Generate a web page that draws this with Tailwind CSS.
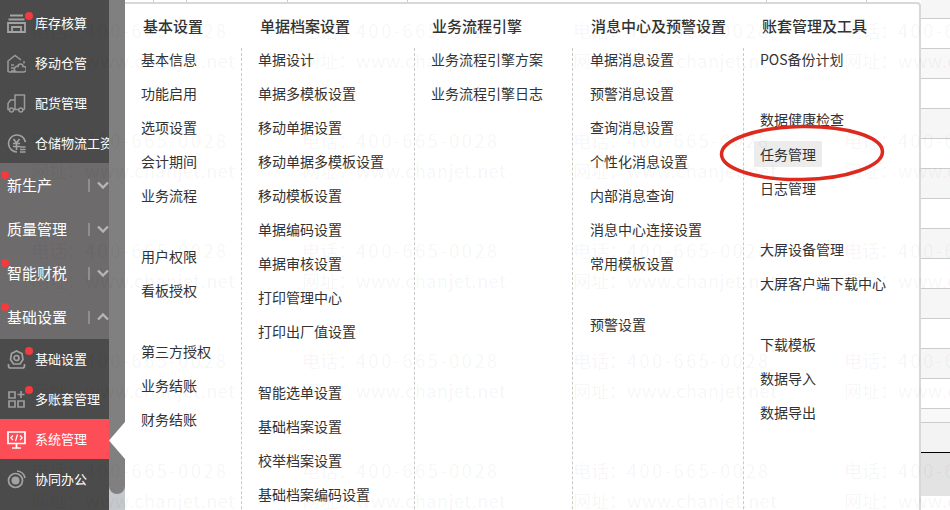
<!DOCTYPE html>
<html lang="zh">
<head>
<meta charset="utf-8">
<script src="https://cdn.jsdelivr.net/npm/@tailwindcss/browser@4"></script>
</head>
<body class="m-0">
<div class="relative flex h-[510px] w-[950px] overflow-hidden bg-white font-['Noto_Sans_CJK_SC','Noto_Sans',sans-serif] text-[14px] text-[#333]">

  <!-- sidebar -->
  <aside class="flex h-full w-[109px] shrink-0 flex-col bg-[#4b4b4b] pt-[3px] text-white">
    <div class="relative flex h-10 items-center overflow-hidden whitespace-nowrap pl-[7px] text-[13px]">
      <svg class="mr-[9px] h-[19px] w-[19px] shrink-0" viewBox="0 0 19 19" fill="none" stroke="#a3a3a3" stroke-width="1.8"><path d="M3 1.500h13M1.500 5.500h16M1 9h17v9H1zM5 13h9v5H5z"/></svg>
      <span>库存核算</span><i class="absolute left-[25px] top-[9px] h-2 w-2 rounded-full bg-[#f23a3f]"></i>
    </div>
    <div class="flex h-10 items-center overflow-hidden whitespace-nowrap pl-[7px] text-[13px]">
      <svg class="mr-[9px] h-[19px] w-[19px] shrink-0" viewBox="0 0 19 19" fill="none" stroke="#9a9a9a" stroke-width="1.5"><path d="M1 18V7l7-5.500 6 4.500M17 9.500V7M9 18H1.500M11 12.500a2.500 2.500 0 0 1 5 0 2.500 2.500 0 0 1 1 5.500h-7.500a2.800 2.800 0 0 1 1.500-5.500zM4 11h3M4 14h3M4 17h3"/></svg>
      <span>移动仓管</span>
    </div>
    <div class="flex h-10 items-center overflow-hidden whitespace-nowrap pl-[7px] text-[13px]">
      <svg class="mr-[9px] h-[19px] w-[19px] shrink-0" viewBox="0 0 19 19" fill="none" stroke="#9a9a9a" stroke-width="1.5"><path d="M8 15.500V1h9.500v14.500M8 6H3.500L1 9.500v6h1.500M6.500 15.500h5.500M15.500 15.500h2"/><circle cx="4.500" cy="16" r="2"/><circle cx="13.800" cy="16" r="2"/></svg>
      <span>配货管理</span>
    </div>
    <div class="flex h-10 items-center overflow-hidden whitespace-nowrap pl-[7px] text-[13px]">
      <svg class="mr-[9px] h-[19px] w-[19px] shrink-0" viewBox="0 0 19 19" fill="none" stroke="#a3a3a3" stroke-width="1.6"><path d="M10 18a8.500 8.500 0 1 1 8.400-10M6.500 5l3 4 3-4M6 9.500h7M6 12.500h7M9.500 9v7M13 13h5.500M13 15.500h5.500M13 18h5.500"/></svg>
      <span>仓储物流工资</span>
    </div>

    <div class="relative flex h-11 items-center justify-between overflow-hidden bg-[#6d6b6b] pl-[7px] text-[15px]">
      <span>新生产</span><i class="absolute left-[1px] top-[8px] h-2 w-2 rounded-full bg-[#f23a3f]"></i>
      <span class="flex items-center"><i class="mr-[7px] block h-[13px] w-[2px] bg-[#8f8f8f]"></i><svg class="h-[8px] w-[12px]" viewBox="0 0 12 8" fill="none" stroke="#b5b5b5" stroke-width="2.400"><path d="M1 1.500 6 6.500l5-5"/></svg></span>
    </div>
    <div class="flex h-11 items-center justify-between overflow-hidden bg-[#6d6b6b] pl-[7px] text-[15px]">
      <span>质量管理</span>
      <span class="flex items-center"><i class="mr-[7px] block h-[13px] w-[2px] bg-[#8f8f8f]"></i><svg class="h-[8px] w-[12px]" viewBox="0 0 12 8" fill="none" stroke="#b5b5b5" stroke-width="2.400"><path d="M1 1.500 6 6.500l5-5"/></svg></span>
    </div>
    <div class="relative flex h-11 items-center justify-between overflow-hidden bg-[#6d6b6b] pl-[7px] text-[15px]">
      <span>智能财税</span><i class="absolute left-[1px] top-[8px] h-2 w-2 rounded-full bg-[#f23a3f]"></i>
      <span class="flex items-center"><i class="mr-[7px] block h-[13px] w-[2px] bg-[#8f8f8f]"></i><svg class="h-[8px] w-[12px]" viewBox="0 0 12 8" fill="none" stroke="#b5b5b5" stroke-width="2.400"><path d="M1 1.500 6 6.500l5-5"/></svg></span>
    </div>
    <div class="relative flex h-11 items-center justify-between overflow-hidden bg-[#6d6b6b] pl-[7px] text-[15px]">
      <span>基础设置</span><i class="absolute left-[1px] top-[8px] h-2 w-2 rounded-full bg-[#f23a3f]"></i>
      <span class="flex items-center"><i class="mr-[7px] block h-[13px] w-[2px] bg-[#8f8f8f]"></i><svg class="h-[8px] w-[12px]" viewBox="0 0 12 8" fill="none" stroke="#b5b5b5" stroke-width="2.400"><path d="M1 6.500 6 1.500l5 5"/></svg></span>
    </div>

    <div class="relative flex h-10 items-center overflow-hidden whitespace-nowrap pl-[7px] text-[13px]">
      <svg class="mr-[9px] h-[19px] w-[19px] shrink-0" viewBox="0 0 19 19" fill="none" stroke="#a3a3a3" stroke-width="1.700"><path d="M9.500 1l5.500 2.500 1 6-3 4.500H6.500l-3-4.500 1-6z"/><circle cx="9.500" cy="8" r="2.500"/><path d="M1.500 14v1.500c0 1.500 1 2.500 2 2.500h12c1 0 2-1 2-2.500V14" /></svg>
      <span>基础设置</span><i class="absolute left-[25px] top-[8px] h-2 w-2 rounded-full bg-[#f23a3f]"></i>
    </div>
    <div class="relative flex h-10 items-center overflow-hidden whitespace-nowrap pl-[7px] text-[13px]">
      <svg class="mr-[9px] h-[19px] w-[19px] shrink-0" viewBox="0 0 19 19" fill="none" stroke="#9c9c9c" stroke-width="1.700"><path d="M2 2h6v6H2zM2 11h6v6H2zM11 11h6v6h-6zM14 1v7M10.500 4.500h7"/></svg>
      <span>多账套管理</span><i class="absolute left-[25px] top-[7px] h-2 w-2 rounded-full bg-[#f23a3f]"></i>
    </div>
    <div class="flex h-10 items-center overflow-hidden whitespace-nowrap bg-[#fd4e58] pl-[7px] text-[13px]">
      <svg class="mr-[9px] h-[19px] w-[19px] shrink-0" viewBox="0 0 19 19" fill="none" stroke="#fff" stroke-width="1.700"><path d="M1 2h17v11.500H1zM9.500 13.500V18M5 18h9"/><path d="M6 5.500 3.800 7.800 6 10M13 5.500l2.200 2.300L13 10M10.500 4.500l-2 6.500" stroke-width="1.200"/></svg>
      <span>系统管理</span>
    </div>
    <div class="flex h-10 items-center overflow-hidden whitespace-nowrap pl-[7px] text-[13px]">
      <svg class="mr-[9px] h-[19px] w-[19px] shrink-0" viewBox="0 0 19 19" fill="none"><circle cx="8.500" cy="10.500" r="7" stroke="#a3a3a3" stroke-width="1.700"/><circle cx="8.500" cy="10.500" r="4" fill="#a3a3a3"/><path d="M10 1a8.500 8.500 0 0 1 8 7" stroke="#a3a3a3" stroke-width="1.700"/></svg>
      <span>协同办公</span>
    </div>
  </aside>

  <!-- scrollbar strip -->
  <div class="relative h-full w-4 shrink-0 bg-[#c5c8cc]">
    <div class="h-[494px] rounded-b-[8px] bg-[#808080]"></div>
    <svg class="absolute left-0 top-[422px] h-[37px] w-4" viewBox="0 0 16 37"><path d="M16 0 0 18.500 16 37z" fill="#fff"/></svg>
  </div>

  <!-- menu panel -->
  <div class="flex h-full w-[796px] shrink-0 flex-col">
    <div class="relative h-[2px] shrink-0 bg-white">
      <i class="absolute left-[28px] top-0 h-[2px] w-px bg-[#ccc]"></i>
      <i class="absolute left-[61px] top-0 h-[2px] w-px bg-[#ccc]"></i>
      <i class="absolute left-[162px] top-0 h-[2px] w-px bg-[#ccc]"></i>
      <i class="absolute left-[282px] top-0 h-[2px] w-px bg-[#ccc]"></i>
      <i class="absolute left-[641px] top-0 h-[2px] w-px bg-[#ccc]"></i>
      <i class="absolute left-[741px] top-0 h-[2px] w-px bg-[#ccc]"></i>
    </div>
    <div class="flex min-h-0 flex-1 overflow-hidden rounded-tr-[4px] border-t-2 border-r-2 border-[#d8d8d8] bg-white">
      <!-- col 1 -->
      <section class="w-[116px] shrink-0">
        <h3 class="flex h-[44px] items-center pl-[18px] text-[15px] font-medium">基本设置</h3>
        <div class="flex flex-col pl-4">
          <p class="-mt-[6px] h-[34px] leading-[34px]">基本信息</p>
          <p class="h-[34px] leading-[34px]">功能启用</p>
          <p class="h-[34px] leading-[34px]">选项设置</p>
          <p class="h-[34px] leading-[34px]">会计期间</p>
          <p class="h-[34px] leading-[34px]">业务流程</p>
          <p class="mt-[27px] h-[34px] leading-[34px]">用户权限</p>
          <p class="h-[34px] leading-[34px]">看板授权</p>
          <p class="mt-[27px] h-[34px] leading-[34px]">第三方授权</p>
          <p class="h-[34px] leading-[34px]">业务结账</p>
          <p class="h-[34px] leading-[34px]">财务结账</p>
        </div>
      </section>
      <!-- col 2 -->
      <section class="w-[173px] shrink-0">
        <h3 class="flex h-[44px] items-center pl-[19px] text-[15px] font-medium">单据档案设置</h3>
        <div class="flex h-full flex-col border-l border-dashed border-[#c8c8c8] pl-4">
          <p class="-mt-[6px] h-[34px] leading-[34px]">单据设计</p>
          <p class="h-[34px] leading-[34px]">单据多模板设置</p>
          <p class="h-[34px] leading-[34px]">移动单据设置</p>
          <p class="h-[34px] leading-[34px]">移动单据多模板设置</p>
          <p class="h-[34px] leading-[34px]">移动模板设置</p>
          <p class="h-[34px] leading-[34px]">单据编码设置</p>
          <p class="h-[34px] leading-[34px]">单据审核设置</p>
          <p class="h-[34px] leading-[34px]">打印管理中心</p>
          <p class="h-[34px] leading-[34px]">打印出厂值设置</p>
          <p class="mt-[27px] h-[34px] leading-[34px]">智能选单设置</p>
          <p class="h-[34px] leading-[34px]">基础档案设置</p>
          <p class="h-[34px] leading-[34px]">校举档案设置</p>
          <p class="h-[34px] leading-[34px]">基础档案编码设置</p>
        </div>
      </section>
      <!-- col 3 -->
      <section class="w-[158px] shrink-0">
        <h3 class="flex h-[44px] items-center pl-[18px] text-[15px] font-medium">业务流程引擎</h3>
        <div class="flex h-full flex-col border-l border-dashed border-[#c8c8c8] pl-4">
          <p class="-mt-[6px] h-[34px] leading-[34px]">业务流程引擎方案</p>
          <p class="h-[34px] leading-[34px]">业务流程引擎日志</p>
        </div>
      </section>
      <!-- col 4 -->
      <section class="w-[171px] shrink-0">
        <h3 class="flex h-[44px] items-center pl-[19px] text-[15px] font-medium">消息中心及预警设置</h3>
        <div class="flex h-full flex-col border-l border-dashed border-[#c8c8c8] pl-[17px]">
          <p class="-mt-[6px] h-[34px] leading-[34px]">单据消息设置</p>
          <p class="h-[34px] leading-[34px]">预警消息设置</p>
          <p class="h-[34px] leading-[34px]">查询消息设置</p>
          <p class="h-[34px] leading-[34px]">个性化消息设置</p>
          <p class="h-[34px] leading-[34px]">内部消息查询</p>
          <p class="h-[34px] leading-[34px]">消息中心连接设置</p>
          <p class="h-[34px] leading-[34px]">常用模板设置</p>
          <p class="mt-[27px] h-[34px] leading-[34px]">预警设置</p>
        </div>
      </section>
      <!-- col 5 -->
      <section class="min-w-0 flex-1">
        <h3 class="flex h-[44px] items-center pl-[19px] text-[15px] font-medium">账套管理及工具</h3>
        <div class="flex h-full flex-col border-l border-dashed border-[#c8c8c8] pl-4">
          <p class="-mt-[6px] h-[34px] leading-[34px]">POS备份计划</p>
          <p class="mt-[26px] h-[34px] leading-[34px]">数据健康检查</p>
          <p class="mt-px flex h-[34px] items-center"><span class="-ml-[6px] block h-[26px] bg-[#ececec] px-[6px] leading-[26px]">任务管理</span></p>
          <p class="h-[34px] leading-[34px]">日志管理</p>
          <p class="mt-[27px] h-[34px] leading-[34px]">大屏设备管理</p>
          <p class="h-[34px] leading-[34px]">大屏客户端下载中心</p>
          <p class="mt-[27px] h-[34px] leading-[34px]">下载模板</p>
          <p class="h-[34px] leading-[34px]">数据导入</p>
          <p class="h-[34px] leading-[34px]">数据导出</p>
        </div>
      </section>
    </div>
  </div>

  <!-- table behind -->
  <div class="flex min-w-0 flex-1 flex-col">
    <div class="h-[19px] border-b border-[#ccc] bg-[#f6f6f6]"></div>
    <div class="h-[30px] border-b border-[#ccc] bg-white"></div>
    <div class="h-[30px] border-b border-[#ccc] bg-[#f8f8f8]"></div>
    <div class="h-[30px] border-b border-[#ccc] bg-white"></div>
    <div class="h-[30px] border-b border-[#ccc] bg-[#f6f6f6]"></div>
    <div class="h-[30px] border-b border-[#ccc] bg-white"></div>
    <div class="h-[30px] border-b border-[#ccc] bg-[#f6f6f6]"></div>
    <div class="h-[30px] border-b border-[#ccc] bg-white"></div>
    <div class="h-[30px] border-b border-[#ccc] bg-[#f6f6f6]"></div>
    <div class="h-[30px] border-b border-[#ccc] bg-white"></div>
    <div class="h-[30px] border-b border-[#ccc] bg-[#f6f6f6]"></div>
    <div class="h-[30px] border-b border-[#ccc] bg-white"></div>
    <div class="h-[30px] border-b border-[#ccc] bg-[#f6f6f6]"></div>
    <div class="h-[30px] border-b border-[#ccc] bg-white"></div>
    <div class="h-[14px] border-b border-[#ccc] bg-[#f8f8f8]"></div>
    <div class="h-[30px] border-b border-black bg-[#f3f3f3]"></div>
    <div class="h-[43px] bg-[#e3e3e3]"></div>
  </div>

  <!-- watermark overlay -->
  <div class="pointer-events-none absolute inset-0 grid grid-cols-[repeat(4,271px)] auto-rows-[110px] pl-[31px] pt-[15px] text-[18px] leading-[30px] whitespace-nowrap text-black/[0.05]">
    <div><div>电话：<span class="tracking-[2.6px]">400-665-0028</span></div><div>网址：<span class="tracking-[0.5px]">www.chanjet.net</span></div></div>
    <div><div>电话：<span class="tracking-[2.6px]">400-665-0028</span></div><div>网址：<span class="tracking-[0.5px]">www.chanjet.net</span></div></div>
    <div><div>电话：<span class="tracking-[2.6px]">400-665-0028</span></div><div>网址：<span class="tracking-[0.5px]">www.chanjet.net</span></div></div>
    <div><div>电话：<span class="tracking-[2.6px]">400-665-0028</span></div><div>网址：<span class="tracking-[0.5px]">www.chanjet.net</span></div></div>
    <div><div>电话：<span class="tracking-[2.6px]">400-665-0028</span></div><div>网址：<span class="tracking-[0.5px]">www.chanjet.net</span></div></div>
    <div><div>电话：<span class="tracking-[2.6px]">400-665-0028</span></div><div>网址：<span class="tracking-[0.5px]">www.chanjet.net</span></div></div>
    <div><div>电话：<span class="tracking-[2.6px]">400-665-0028</span></div><div>网址：<span class="tracking-[0.5px]">www.chanjet.net</span></div></div>
    <div><div>电话：<span class="tracking-[2.6px]">400-665-0028</span></div><div>网址：<span class="tracking-[0.5px]">www.chanjet.net</span></div></div>
    <div><div>电话：<span class="tracking-[2.6px]">400-665-0028</span></div><div>网址：<span class="tracking-[0.5px]">www.chanjet.net</span></div></div>
    <div><div>电话：<span class="tracking-[2.6px]">400-665-0028</span></div><div>网址：<span class="tracking-[0.5px]">www.chanjet.net</span></div></div>
    <div><div>电话：<span class="tracking-[2.6px]">400-665-0028</span></div><div>网址：<span class="tracking-[0.5px]">www.chanjet.net</span></div></div>
    <div><div>电话：<span class="tracking-[2.6px]">400-665-0028</span></div><div>网址：<span class="tracking-[0.5px]">www.chanjet.net</span></div></div>
    <div><div>电话：<span class="tracking-[2.6px]">400-665-0028</span></div><div>网址：<span class="tracking-[0.5px]">www.chanjet.net</span></div></div>
    <div><div>电话：<span class="tracking-[2.6px]">400-665-0028</span></div><div>网址：<span class="tracking-[0.5px]">www.chanjet.net</span></div></div>
    <div><div>电话：<span class="tracking-[2.6px]">400-665-0028</span></div><div>网址：<span class="tracking-[0.5px]">www.chanjet.net</span></div></div>
    <div><div>电话：<span class="tracking-[2.6px]">400-665-0028</span></div><div>网址：<span class="tracking-[0.5px]">www.chanjet.net</span></div></div>
    <div><div>电话：<span class="tracking-[2.6px]">400-665-0028</span></div><div>网址：<span class="tracking-[0.5px]">www.chanjet.net</span></div></div>
    <div><div>电话：<span class="tracking-[2.6px]">400-665-0028</span></div><div>网址：<span class="tracking-[0.5px]">www.chanjet.net</span></div></div>
    <div><div>电话：<span class="tracking-[2.6px]">400-665-0028</span></div><div>网址：<span class="tracking-[0.5px]">www.chanjet.net</span></div></div>
    <div><div>电话：<span class="tracking-[2.6px]">400-665-0028</span></div><div>网址：<span class="tracking-[0.5px]">www.chanjet.net</span></div></div>
  </div>

  <!-- red annotation ellipse -->
  <svg class="pointer-events-none absolute left-[715px] top-[120px] h-[66px] w-[174px]" viewBox="0 0 174 66" fill="none"><ellipse cx="87" cy="33" rx="80.500" ry="26.500" stroke="#dd2a1f" stroke-width="3.500" transform="rotate(-1 87 33)"/></svg>
</div>
</body>
</html>
